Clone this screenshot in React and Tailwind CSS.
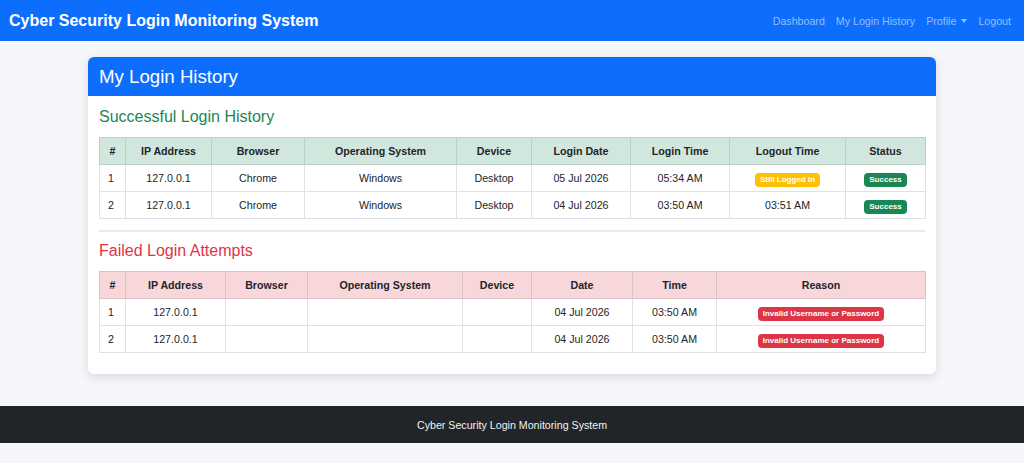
const successRows = [
    { ip: "127.0.0.1", browser: "Chrome", os: "Windows", device: "Desktop", date: "05 Jul 2026", time: "05:34 AM", logout: null },
    { ip: "127.0.0.1", browser: "Chrome", os: "Windows", device: "Desktop", date: "04 Jul 2026", time: "03:50 AM", logout: "03:51 AM" },
]

const failedRows = [
    { ip: "127.0.0.1", date: "04 Jul 2026", time: "03:50 AM", reason: "Invalid Username or Password" },
    { ip: "127.0.0.1", date: "04 Jul 2026", time: "03:50 AM", reason: "Invalid Username or Password" },
]

function Badge({ color, children }) {
    return (
        <span className={`inline-block rounded-[4px] px-[5px] py-[3px] text-[8px] font-bold leading-[8px] text-white ${color}`}>
            {children}
        </span>
    )
}

function Th({ w, children, border }) {
    return (
        <th className={`border ${border} h-[27px] px-[5px] text-center text-[10.67px] font-bold text-[#212529] ${w}`}>
            {children}
        </th>
    )
}

function Td({ children, left }) {
    return (
        <td className={`border border-[#dee2e6] h-[27px] px-[5px] text-[10.67px] text-[#212529] ${left ? "text-left pl-[8px]" : "text-center"}`}>
            {children}
        </td>
    )
}

export default function App() {
    return (
        <div className="min-h-[463px] bg-[#f4f6f9] flex flex-col" style={{ fontFamily: '"Liberation Sans", Arial, sans-serif' }}>
            {/* Navbar */}
            <nav className="h-[41px] bg-[#0d6efd] flex items-center justify-between pl-[9px] pr-[13px]">
                <span className="text-white font-bold text-[16px]">Cyber Security Login Monitoring System</span>
                <div className="flex items-center gap-[11px] text-[10.67px] text-[#93befe]">
                    <span>Dashboard</span>
                    <span>My Login History</span>
                    <span className="flex items-center gap-[5px]">
                        Profile
                        <span className="inline-block w-0 h-0 border-l-[3.5px] border-r-[3.5px] border-t-[4px] border-l-transparent border-r-transparent border-t-[#93befe]" />
                    </span>
                    <span>Logout</span>
                </div>
            </nav>

            {/* Card */}
            <div className="mt-[16px] mb-[32px] w-[848px] mx-auto bg-white rounded-[6px] shadow-[0_3px_10px_rgba(0,0,0,0.12)] overflow-hidden">
                <div className="h-[39px] bg-[#0d6efd] flex items-center px-[11px]">
                    <h3 className="text-white text-[18.67px]">My Login History</h3>
                </div>
                <div className="px-[11px] pt-[11px] pb-[21px]">
                    <h4 className="text-[16px] leading-[20px] text-[#198754] mb-[10px]">Successful Login History</h4>
                    <table className="w-[826px] border-collapse table-fixed">
                        <thead>
                            <tr className="bg-[#d1e7dd]">
                                <Th w="w-[26px]" border="border-[#bcd0c7]">#</Th>
                                <Th w="w-[86px]" border="border-[#bcd0c7]">IP Address</Th>
                                <Th w="w-[93px]" border="border-[#bcd0c7]">Browser</Th>
                                <Th w="w-[152px]" border="border-[#bcd0c7]">Operating System</Th>
                                <Th w="w-[75px]" border="border-[#bcd0c7]">Device</Th>
                                <Th w="w-[99px]" border="border-[#bcd0c7]">Login Date</Th>
                                <Th w="w-[99px]" border="border-[#bcd0c7]">Login Time</Th>
                                <Th w="w-[116px]" border="border-[#bcd0c7]">Logout Time</Th>
                                <Th w="w-[80px]" border="border-[#bcd0c7]">Status</Th>
                            </tr>
                        </thead>
                        <tbody>
                            {successRows.map((r, i) => (
                                <tr key={i}>
                                    <Td left>{i + 1}</Td>
                                    <Td>{r.ip}</Td>
                                    <Td>{r.browser}</Td>
                                    <Td>{r.os}</Td>
                                    <Td>{r.device}</Td>
                                    <Td>{r.date}</Td>
                                    <Td>{r.time}</Td>
                                    <Td>{r.logout ? r.logout : <Badge color="bg-[#ffc107]">Still Logged In</Badge>}</Td>
                                    <Td><Badge color="bg-[#198754]">Success</Badge></Td>
                                </tr>
                            ))}
                        </tbody>
                    </table>

                    <hr className="mt-[11px] mb-[9px] border-t-2 border-[#e9ecef]" />

                    <h4 className="text-[16px] leading-[20px] text-[#dc3545] mb-[10px]">Failed Login Attempts</h4>
                    <table className="w-[826px] border-collapse table-fixed">
                        <thead>
                            <tr className="bg-[#f8d7da]">
                                <Th w="w-[26px]" border="border-[#dfc2c4]">#</Th>
                                <Th w="w-[100px]" border="border-[#dfc2c4]">IP Address</Th>
                                <Th w="w-[82px]" border="border-[#dfc2c4]">Browser</Th>
                                <Th w="w-[155px]" border="border-[#dfc2c4]">Operating System</Th>
                                <Th w="w-[69px]" border="border-[#dfc2c4]">Device</Th>
                                <Th w="w-[101px]" border="border-[#dfc2c4]">Date</Th>
                                <Th w="w-[84px]" border="border-[#dfc2c4]">Time</Th>
                                <Th w="w-[209px]" border="border-[#dfc2c4]">Reason</Th>
                            </tr>
                        </thead>
                        <tbody>
                            {failedRows.map((r, i) => (
                                <tr key={i}>
                                    <Td left>{i + 1}</Td>
                                    <Td>{r.ip}</Td>
                                    <Td></Td>
                                    <Td></Td>
                                    <Td></Td>
                                    <Td>{r.date}</Td>
                                    <Td>{r.time}</Td>
                                    <Td><Badge color="bg-[#dc3545]">{r.reason}</Badge></Td>
                                </tr>
                            ))}
                        </tbody>
                    </table>
                </div>
            </div>

            {/* Footer */}
            <footer className="h-[37px] bg-[#212529] flex items-center justify-center text-[10.67px] text-[#f1f3f5]">
                Cyber Security Login Monitoring System
            </footer>
        </div>
    )
}
